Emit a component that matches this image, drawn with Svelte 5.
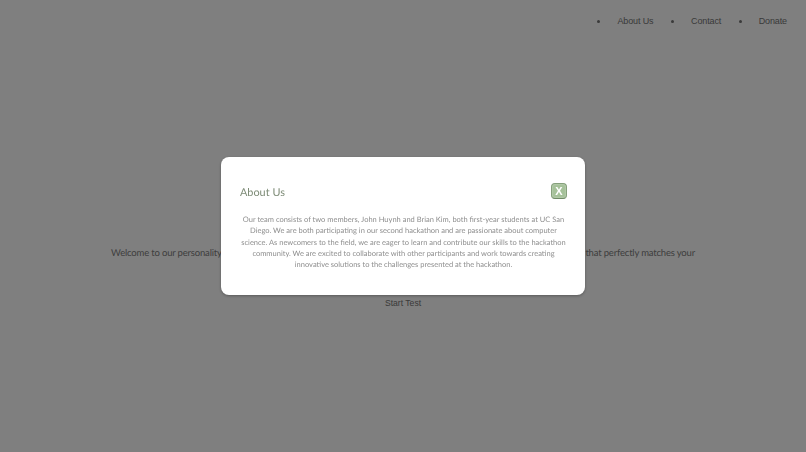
<script>
	let showAbout = $state(true);
	const links = ['About Us', 'Contact', 'Donate'];
</script>

<div class="page">
	<nav class="nav">
		<ul>
			{#each links as link}
				<li><button class="link" onclick={() => (showAbout = link === 'About Us')}>{link}</button></li>
			{/each}
		</ul>
	</nav>

	<main class="hero">
		<p class="intro">
			Welcome to our personality test! Our test is designed to help you learn more about yourself and discover a good career that perfectly matches your
		</p>
		<button class="start">Start Test</button>
	</main>
</div>

{#if showAbout}
	<div class="overlay">
		<div class="modal">
			<header class="modal-head">
				<h2>About Us</h2>
				<button class="close" onclick={() => (showAbout = false)}>X</button>
			</header>
			<p class="modal-body">
				Our team consists of two members, John Huynh and Brian Kim, both first-year students at UC San Diego. We are both participating in our second hackathon and are passionate about computer science. As newcomers to the field, we are eager to learn and contribute our skills to the hackathon community. We are excited to collaborate with other participants and work towards creating innovative solutions to the challenges presented at the hackathon.
			</p>
		</div>
	</div>
{/if}

<style>
	:global(body) {
		margin: 0;
		background: #fff;
		text-rendering: geometricPrecision;
	}

	.page {
		height: 452px;
		display: flex;
		flex-direction: column;
		color: #747474;
	}

	.nav ul {
		display: flex;
		justify-content: flex-end;
		margin: 0;
		padding: 15px 19px 0 0;
		gap: 29.5px;
		font: 9px/12px 'Liberation Sans', Arial, sans-serif;
		letter-spacing: -0.12px;
	}

	.nav li {
		padding-left: 8px;
	}

	.link,
	.start {
		background: none;
		border: 0;
		padding: 0;
		color: inherit;
		font: inherit;
		letter-spacing: inherit;
		cursor: pointer;
	}

	.hero {
		text-align: center;
		padding-top: 220px;
	}

	.intro {
		margin: 0;
		color: #7c7c7c;
		font: 9.5px/14px Lato, 'Noto Sans', sans-serif;
		letter-spacing: -0.18px;
	}

	.start {
		margin-top: 36px;
		font: 8.6px/12px 'Liberation Sans', Arial, sans-serif;
	}

	.overlay {
		position: fixed;
		inset: 0;
		background: rgba(0, 0, 0, 0.5);
		display: flex;
		align-items: center;
		justify-content: center;
	}

	.modal {
		box-sizing: border-box;
		width: 364px;
		height: 138px;
		padding: 23px 18px 0 19px;
		background: #fff;
		border-radius: 8px;
		box-shadow: 0 1px 3px rgba(0, 0, 0, 0.3);
	}

	.modal-head {
		display: flex;
		align-items: flex-start;
		justify-content: space-between;
		color: #7d8b76;
	}

	.modal-head h2 {
		margin: 4px 0 0;
		font: 400 10.9px/18px Lato, 'Noto Sans', sans-serif;
	}

	.close {
		width: 16px;
		height: 16px;
		margin-top: 3px;
		padding: 0;
		border: 1px solid #86a07c;
		border-bottom-color: #6f8a66;
		border-radius: 4px;
		background: #a5c199;
		box-shadow: inset 0 0 2px rgba(255, 255, 255, 0.5);
		color: #fff;
		font: 700 11px/14px 'Liberation Sans', Arial, sans-serif;
		cursor: pointer;
	}

	.modal-body {
		margin: 12px 0 0;
		text-align: center;
		color: #8e8e8e;
		font: 7.5px/11.3px Lato, 'Noto Sans', sans-serif;
	}
</style>
